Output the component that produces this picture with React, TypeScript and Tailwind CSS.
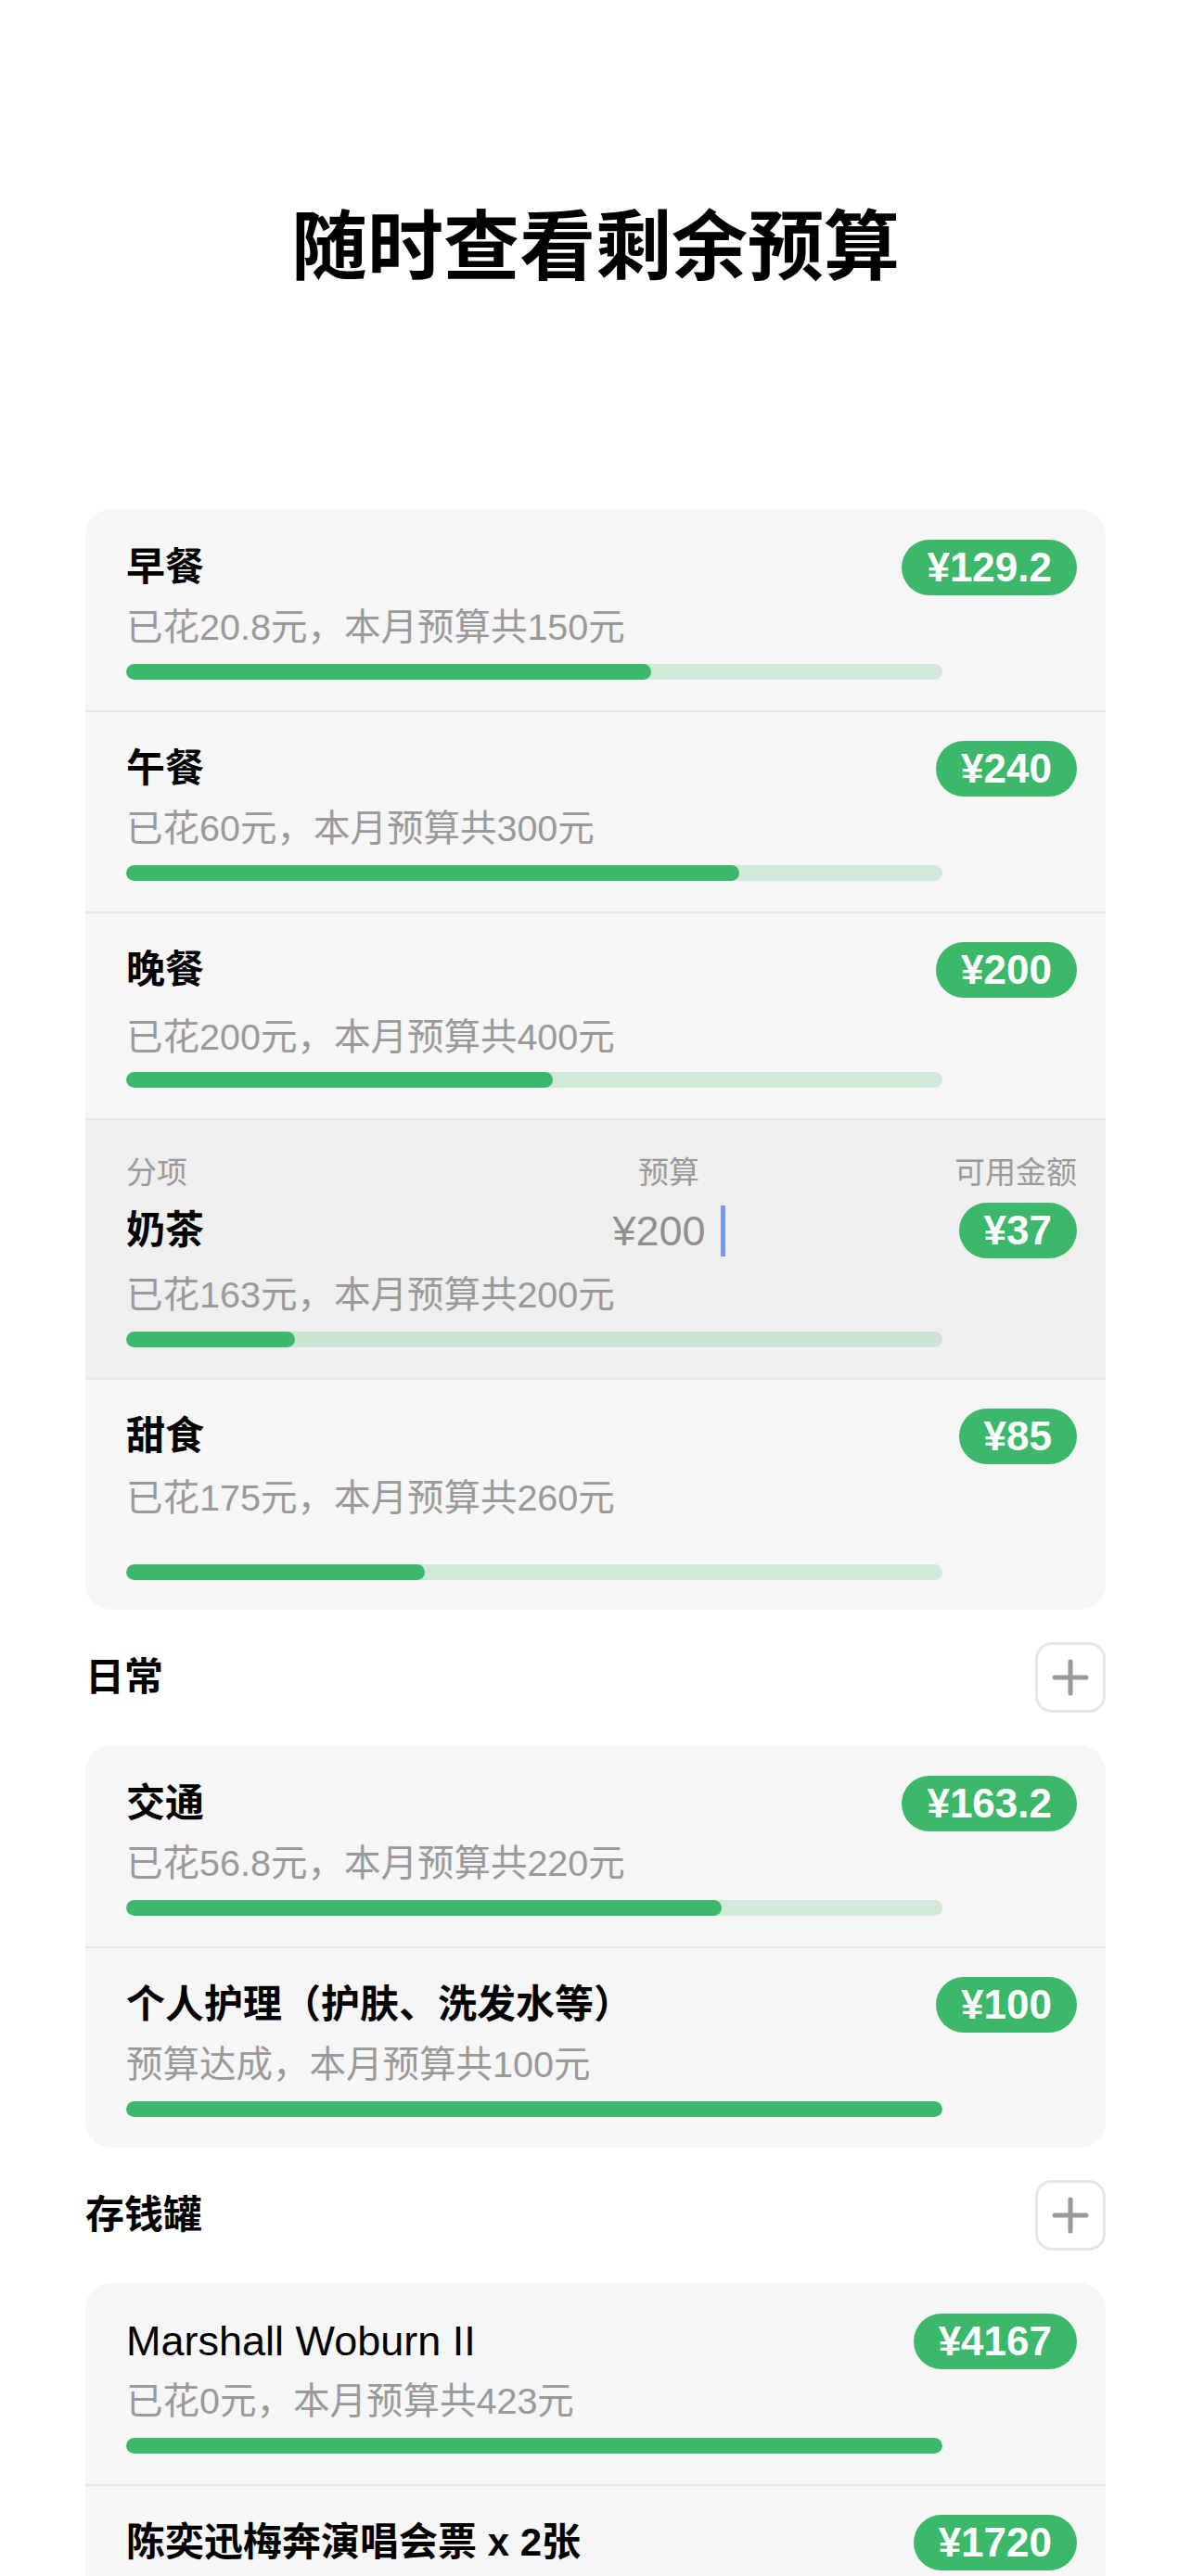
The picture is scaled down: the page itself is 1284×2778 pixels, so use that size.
import { Plus } from "lucide-react";

type Item = {
  name: string;
  sub?: string;
  amount: string;
  fill: number;
  latin?: boolean;
  subMt?: string;
  barMt?: string;
  pb?: string;
};

const BAR = 880;

const meals: Item[] = [
  { name: "早餐", sub: "已花20.8元，本月预算共150元", amount: "¥129.2", fill: 566 },
  { name: "午餐", sub: "已花60元，本月预算共300元", amount: "¥240", fill: 661 },
  {
    name: "晚餐",
    sub: "已花200元，本月预算共400元",
    amount: "¥200",
    fill: 460,
    subMt: "mt-[18px]",
    barMt: "mt-[14px]",
  },
];

const sweets: Item = {
  name: "甜食",
  sub: "已花175元，本月预算共260元",
  amount: "¥85",
  fill: 322,
  subMt: "mt-[12px]",
  barMt: "mt-[48px]",
  pb: "pb-[32px]",
};

const daily: Item[] = [
  { name: "交通", sub: "已花56.8元，本月预算共220元", amount: "¥163.2", fill: 642 },
  { name: "个人护理（护肤、洗发水等）", sub: "预算达成，本月预算共100元", amount: "¥100", fill: BAR },
];

// second jar runs off the bottom of the screen, only its header shows
const jars: Item[] = [
  { name: "Marshall Woburn II", sub: "已花0元，本月预算共423元", amount: "¥4167", fill: BAR, latin: true },
  { name: "陈奕迅梅奔演唱会票 x 2张", amount: "¥1720", fill: BAR },
];

function Badge({ amount }: { amount: string }) {
  return (
    <div className="h-[60px] px-[27px] rounded-full bg-[#3cb86a] flex items-center text-white text-[44px] font-bold leading-none shrink-0">
      {amount}
    </div>
  );
}

function Bar({ fill, className = "mt-[16px]" }: { fill: number; className?: string }) {
  return (
    <div className={`${className} w-[880px] h-[17px] rounded-full bg-[#3cb86a]/20 overflow-hidden`}>
      <div className="h-full rounded-full bg-[#3cb86a]" style={{ width: `${(fill / BAR) * 100}%` }} />
    </div>
  );
}

function Row({ item, first }: { item: Item; first?: boolean }) {
  return (
    <div
      className={`pl-[44px] pr-[31px] ${first ? "pt-[33px]" : "pt-[31px] border-t-2 border-[#e6e6e6]"} ${
        item.pb ?? "pb-[33px]"
      }`}
    >
      <div className="h-[60px] flex items-center justify-between">
        <span
          className={`leading-[60px] text-black ${
            item.latin ? "text-[45px] font-normal" : "text-[42px] font-semibold"
          }`}
        >
          {item.name}
        </span>
        <Badge amount={item.amount} />
      </div>
      {item.sub && (
        <>
          <p className={`${item.subMt ?? "mt-[10px]"} text-[39.5px] leading-[48px] text-[#999999]`}>{item.sub}</p>
          <Bar fill={item.fill} className={item.barMt ?? "mt-[16px]"} />
        </>
      )}
    </div>
  );
}

function EditingRow() {
  return (
    <div className="bg-[#efefef] pl-[44px] pr-[31px] pt-[37px] pb-[33px] border-t-2 border-[#e6e6e6]">
      <div className="grid grid-cols-[500px_170px_1fr] gap-y-[12px] items-center">
        <span className="text-[33px] leading-[40px] text-[#999999]">分项</span>
        <span className="text-[33px] leading-[40px] text-[#999999] text-center">预算</span>
        <span className="text-[33px] leading-[40px] text-[#999999] text-right">可用金额</span>
        <span className="text-[42px] leading-[60px] font-semibold text-black">奶茶</span>
        <div className="flex items-center justify-center gap-[16px]">
          <span className="text-[45px] leading-none text-[#8f8f8f]">¥200</span>
          <span className="w-[5px] h-[55px] bg-[#6a9dff]" />
        </div>
        <div className="justify-self-end">
          <Badge amount="¥37" />
        </div>
      </div>
      <p className="mt-[15px] text-[39.5px] leading-[48px] text-[#999999]">已花163元，本月预算共200元</p>
      <Bar fill={182} />
    </div>
  );
}

function SectionHeader({ title }: { title: string }) {
  return (
    <div className="mt-[35px] mb-[35px] h-[76px] flex items-center justify-between">
      <h2 className="text-[42px] leading-[60px] font-semibold text-black">{title}</h2>
      <button className="w-[76px] h-[76px] rounded-[18px] border-[3px] border-[#e6e6e6] bg-white flex items-center justify-center">
        <Plus className="w-[58px] h-[58px] text-[#999999]" strokeWidth={2.1} />
      </button>
    </div>
  );
}

export default function App() {
  return (
    <div className="min-h-[2778px] bg-white font-['Liberation_Sans','Noto_Sans_CJK_SC',sans-serif] overflow-hidden">
      <div className="w-[1100px] mx-auto">
        <h1 className="pt-[226px] text-center text-[82px] leading-[82px] font-bold text-black">随时查看剩余预算</h1>

        <div className="mt-[241px] rounded-[28px] bg-[#f6f6f6] overflow-hidden">
          {meals.map((m, i) => (
            <Row key={m.name} item={m} first={i === 0} />
          ))}
          <EditingRow />
          <Row item={sweets} />
        </div>

        <SectionHeader title="日常" />
        <div className="rounded-[28px] bg-[#f6f6f6] overflow-hidden">
          {daily.map((m, i) => (
            <Row key={m.name} item={m} first={i === 0} />
          ))}
        </div>

        <SectionHeader title="存钱罐" />
        <div className="rounded-[28px] bg-[#f6f6f6] overflow-hidden">
          {jars.map((m, i) => (
            <Row key={m.name} item={m} first={i === 0} />
          ))}
        </div>
      </div>
    </div>
  );
}
